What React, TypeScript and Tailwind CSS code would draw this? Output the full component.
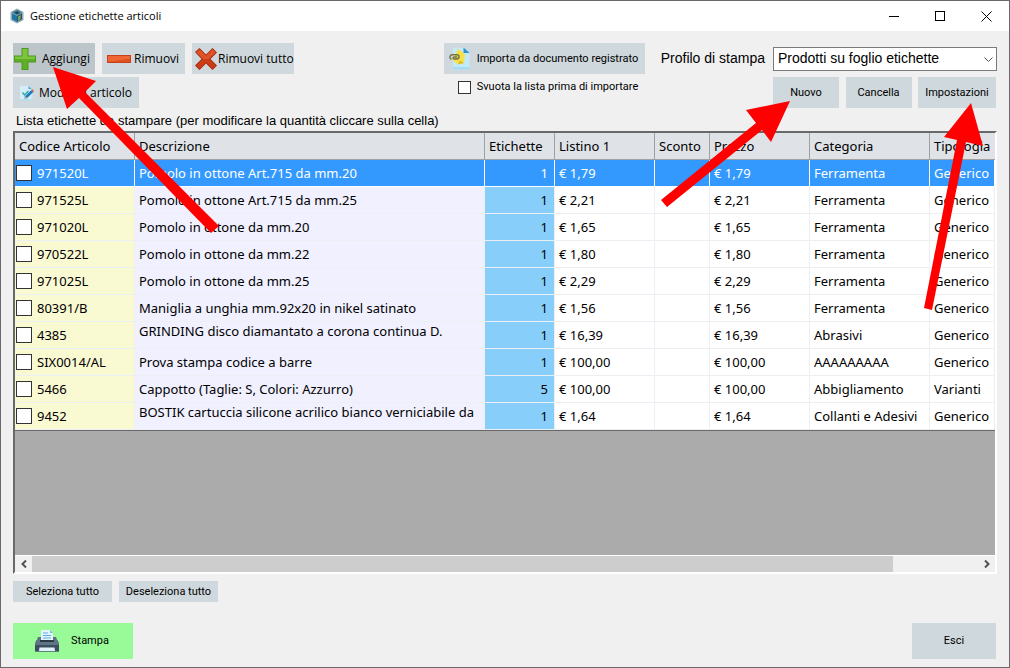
import React, { useState } from 'react';
import clsx from 'clsx';

interface Articolo {
  codice: string;
  descrizione: string;
  etichette: number;
  prezzo: string;
  categoria: string;
  tipologia: string;
  multiline?: boolean;
}

const articoli: Articolo[] = [
  { codice: '971520L', descrizione: 'Pomolo in ottone Art.715 da mm.20', etichette: 1, prezzo: '€ 1,79', categoria: 'Ferramenta', tipologia: 'Generico' },
  { codice: '971525L', descrizione: 'Pomolo in ottone Art.715 da mm.25', etichette: 1, prezzo: '€ 2,21', categoria: 'Ferramenta', tipologia: 'Generico' },
  { codice: '971020L', descrizione: 'Pomolo in ottone da mm.20', etichette: 1, prezzo: '€ 1,65', categoria: 'Ferramenta', tipologia: 'Generico' },
  { codice: '970522L', descrizione: 'Pomolo in ottone da mm.22', etichette: 1, prezzo: '€ 1,80', categoria: 'Ferramenta', tipologia: 'Generico' },
  { codice: '971025L', descrizione: 'Pomolo in ottone da mm.25', etichette: 1, prezzo: '€ 2,29', categoria: 'Ferramenta', tipologia: 'Generico' },
  { codice: '80391/B', descrizione: 'Maniglia a unghia mm.92x20 in nikel satinato', etichette: 1, prezzo: '€ 1,56', categoria: 'Ferramenta', tipologia: 'Generico' },
  { codice: '4385', descrizione: 'GRINDING disco diamantato a corona continua D.', etichette: 1, prezzo: '€ 16,39', categoria: 'Abrasivi', tipologia: 'Generico', multiline: true },
  { codice: 'SIX0014/AL', descrizione: 'Prova stampa codice a barre', etichette: 1, prezzo: '€ 100,00', categoria: 'AAAAAAAAA', tipologia: 'Generico' },
  { codice: '5466', descrizione: 'Cappotto (Taglie: S, Colori: Azzurro)', etichette: 5, prezzo: '€ 100,00', categoria: 'Abbigliamento', tipologia: 'Varianti' },
  { codice: '9452', descrizione: 'BOSTIK cartuccia silicone acrilico bianco verniciabile da', etichette: 1, prezzo: '€ 1,64', categoria: 'Collanti e Adesivi', tipologia: 'Generico', multiline: true }
];

const colonne = [
  { title: 'Codice Articolo', width: 'w-[120px]' },
  { title: 'Descrizione', width: 'w-[350px]' },
  { title: 'Etichette', width: 'w-[70px]' },
  { title: 'Listino 1', width: 'w-[100px]' },
  { title: 'Sconto', width: 'w-[55px]' },
  { title: 'Prezzo', width: 'w-[100px]' },
  { title: 'Categoria', width: 'w-[120px]' },
  { title: 'Tipologia', width: '' }
];

const AppIcon = () => (
  <svg viewBox="0 0 14 16" className="w-[14px] h-4">
    <path d="M7 0.5L13.5 4v8L7 15.5 0.5 12V4z" fill="#8fb0b8" />
    <path d="M7 1.8L12.2 4.6 7 7.4 1.8 4.6z" fill="#4d8496" />
    <path d="M2 5.2l5 2.7v6L2 11.2z" fill="#1f75a8" />
    <path d="M12 5.2L7 7.9v6l5-2.7z" fill="#2b5560" />
    <path d="M4 4.6l3-1.4 3 1.4-3 1.6z" fill="#17465e" />
    <path d="M8.3 8.6l2.7-1.4v1l-1.6.9v.8l1.3-.7v1l-1.3.7v1.5l-1.1.6z" fill="#a3c46a" />
  </svg>
);

const PlusIcon = () => (
  <svg viewBox="0 0 22 22" className="w-[22px] h-[22px] shrink-0">
    <path d="M7.5 0h7v7.5H22v7h-7.500V22h-7v-7.500H0v-7h7.500z" fill="#4c9a1d" />
    <path d="M8.500 1h5v7.500H21V11H1V8.500h7.500z" fill="#7cc53c" />
    <path d="M1 11h20v2.500h-7.500V21h-5v-7.500H1z" fill="#5fae27" />
  </svg>
);

const MinusIcon = () => (
  <svg viewBox="0 0 24 8" className="w-6 h-2 shrink-0">
    <path d="M0 0h24v8H0z" fill="#c8401c" />
    <path d="M1 1h22v3L1 7z" fill="#ee6733" />
    <path d="M23 4v3H1z" fill="#e0521f" />
  </svg>
);

const CrossIcon = () => (
  <svg viewBox="0 0 22 22" className="w-[22px] h-[22px] shrink-0">
    <path d="M0 4L4.500 0 11 6.500 17.500 0 22 4.500 15.500 11 22 17.500 17.500 22 11 15.500 4.500 22 0 17.500 6.500 11z" fill="#a82a0c" />
    <path d="M1.300 4.200L4.500 1.300 11 7.800l6.500-6.500 3.200 3.200L14 11H8z" fill="#e0532a" />
    <path d="M8 11h6l6.700 6.500-3.200 3.200L11 14.200l-6.500 6.500-3.200-3.200z" fill="#cb3d16" />
  </svg>
);

const EditIcon = () => (
  <svg viewBox="0 0 14 16" className="w-[14px] h-4 shrink-0">
    <path d="M0 1h8.500L11.500 4v11.500H0z" fill="#d3eefa" />
    <path d="M8.500 1v3h3z" fill="#3fa5d8" />
    <path d="M0 14.500h11.500v1H0z" fill="#a2d4ea" />
    <path d="M2.500 7.500l2 2.500 4-4" fill="none" stroke="#2eae9a" strokeWidth="1.500" />
    <path d="M5 11.300L11.300 5 13.300 7 7 13.200l-2.700.8z" fill="#1f7fc0" />
    <path d="M11.300 5l.8-.9 2 2-.8.9z" fill="#e2574c" />
    <path d="M4.300 14l.7-2.700L7 13.200z" fill="#f1c27d" />
  </svg>
);

const ImportIcon = () => (
  <svg viewBox="0 0 21 23" className="w-[21px] h-[23px] shrink-0">
    <path d="M4 1h11l5.500 5.500V22.500H4z" fill="#c3eafa" />
    <path d="M4 20h16.500v2.500H4z" fill="#a7dcf2" />
    <path d="M14.500 0.500v5.500h6z" fill="#2b93cf" />
    <path d="M9 1.500l7 5.500-1 9-6 1.500-5-4z" fill="#f6e04c" />
    <path d="M9 17.500l6-1.500-4.500-2.500z" fill="#d9bd2a" />
    <path d="M2.500 12.500C0 11 .5 7.700 3.500 7.700h4.300c3 0 3 4.300 0 4.300H5.200c-1.500 0-1.500-2 0-2h3" fill="none" stroke="#75713f" strokeWidth="1.400" />
  </svg>
);

const PrinterIcon = () => (
  <svg viewBox="0 0 24 22" className="w-6 h-[22px] shrink-0">
    <path d="M6 0h9l3 3v9H6z" fill="#e6f5fd" />
    <path d="M15 0v3h3z" fill="#6cc0e8" />
    <path d="M8 3h5M8 5.500h8M8 8h8" stroke="#5aaee0" strokeWidth="1.200" />
    <path d="M3 7h3v4h12V7h3l1.500 4H1.500z" fill="#5c7386" />
    <path d="M1.500 10h21L24 13v8.500H0V13z" fill="#5f7485" />
    <path d="M0 15h24v6.500H0z" fill="#3d4f5e" />
    <path d="M5 10h14v2H5z" fill="#2c3a46" />
    <path d="M4.500 17.500h15l.5 3.500H4z" fill="#dff3fc" />
  </svg>
);

interface ButtonProps {
  className?: string;
  children: React.ReactNode;
  onClick?: () => void;
}

const Button = ({ className, children, onClick }: ButtonProps) => (
  <button
    type="button"
    onClick={onClick}
    className={clsx('flex items-center whitespace-nowrap leading-4', className)}
  >
    {children}
  </button>
);

const TitleBar = () => (
  <header className="flex h-[30px] shrink-0 items-center bg-white pl-[9px]">
    <AppIcon />
    <h1 className="ml-[6px] font-['Open_Sans',sans-serif] text-[11px] leading-4">Gestione etichette articoli</h1>
    <div className="ml-auto flex h-full">
      <button type="button" aria-label="Riduci a icona" className="flex w-[46px] items-center justify-center">
        <svg viewBox="0 0 11 11" className="w-[11px] h-[11px]" shapeRendering="crispEdges">
          <path d="M0 5.500h10" stroke="#000" />
        </svg>
      </button>
      <button type="button" aria-label="Ingrandisci" className="flex w-[46px] items-center justify-center">
        <svg viewBox="0 0 11 11" className="w-[11px] h-[11px]" shapeRendering="crispEdges">
          <path d="M0.500 0.500h9v9h-9z" fill="none" stroke="#000" />
        </svg>
      </button>
      <button type="button" aria-label="Chiudi" className="flex w-[46px] items-center justify-center">
        <svg viewBox="0 0 11 11" className="w-[11px] h-[11px]">
          <path d="M0.500 0.500l10 10M10.500 0.500l-10 10" stroke="#000" />
        </svg>
      </button>
    </div>
  </header>
);

const Toolbar = () => (
  <div className="flex shrink-0">
    <div className="flex flex-col items-start gap-[3px] font-['Open_Sans',sans-serif] text-[12px]">
      <div className="flex gap-[7px]">
        <Button className="h-[31px] w-[82px] gap-[6px] bg-[#bcc5ca] pl-px">
          <PlusIcon />
          Aggiungi
        </Button>
        <Button className="h-[31px] w-[83px] gap-[3px] bg-[#cfd8dc] pl-[5px]">
          <MinusIcon />
          Rimuovi
        </Button>
        <Button className="h-[31px] w-[102px] gap-px bg-[#cfd8dc] pl-[3px]">
          <CrossIcon />
          Rimuovi tutto
        </Button>
      </div>
      <Button className="h-[31px] w-[126px] gap-[5px] bg-[#cfd8dc] pl-[7px]">
        <EditIcon />
        Modifica articolo
      </Button>
    </div>

    <div className="ml-auto flex gap-4">
      <div>
        <Button className="h-[31px] w-[201px] gap-[7px] bg-[#cfd8dc] pl-[5px]">
          <ImportIcon />
          Importa da documento registrato
        </Button>
        <label className="mt-1 flex items-center gap-[6px] pl-[14px] leading-[18px]">
          <input type="checkbox" className="h-[13px] w-[13px] appearance-none border border-[#333] bg-white checked:bg-[#3399ff]" />
          Svuota la lista prima di importare
        </label>
      </div>

      <div className="flex flex-col gap-[3px]">
        <div className="flex h-[31px] items-center gap-2 font-['Liberation_Sans',sans-serif] text-[14px]">
          <label htmlFor="profilo">Profilo di stampa</label>
          <div className="relative w-56">
            <select
              id="profilo"
              className="block h-6 w-full appearance-none border border-[#7a7a7a] bg-white pl-1 pb-[2px] leading-5"
            >
              <option>Prodotti su foglio etichette</option>
            </select>
            <svg viewBox="0 0 9 5" className="pointer-events-none absolute top-[10px] right-1 w-[9px] h-[5px]">
              <path d="M0.500 0.500l4 4 4-4" fill="none" stroke="#555" />
            </svg>
          </div>
        </div>
        <div className="flex w-56 justify-between self-end pr-px">
          <Button className="h-[31px] w-[66px] justify-center bg-[#cfd8dc]">Nuovo</Button>
          <Button className="h-[31px] w-[66px] justify-center bg-[#cfd8dc]">Cancella</Button>
          <Button className="h-[31px] w-[78px] justify-center bg-[#cfd8dc]">Impostazioni</Button>
        </div>
      </div>
    </div>
  </div>
);

interface RowProps {
  articolo: Articolo;
  selected: boolean;
  checked: boolean;
  onSelect: () => void;
  onCheck: () => void;
}

const Row = ({ articolo, selected, checked, onSelect, onCheck }: RowProps) => {
  const cell = clsx(
    'h-[27px] overflow-hidden border-r border-b p-0 pl-1 whitespace-nowrap',
    selected ? 'border-white bg-[#3399ff] text-white' : 'border-[#eceff3]'
  );
  const white = !selected && 'bg-white';

  return (
    <tr onClick={onSelect}>
      <td className={clsx(cell, !selected && 'bg-[#fafad2]')}>
        <label className="-ml-[3px] flex items-center gap-[5px]">
          <input
            type="checkbox"
            checked={checked}
            onChange={onCheck}
            className="h-4 w-4 appearance-none border border-[#333] bg-white checked:bg-[#333]"
          />
          {articolo.codice}
        </label>
      </td>
      <td
        className={clsx(cell, !selected && 'bg-[#f0f0ff]', articolo.multiline && 'pb-2')}
      >
        {articolo.descrizione}
      </td>
      <td className={clsx(cell, 'pr-[6px] text-right', !selected && 'bg-[#87cefa]')}>{articolo.etichette}</td>
      <td className={clsx(cell, white)}>{articolo.prezzo}</td>
      <td className={clsx(cell, white)}></td>
      <td className={clsx(cell, white)}>{articolo.prezzo}</td>
      <td className={clsx(cell, white)}>{articolo.categoria}</td>
      <td className={clsx(cell, white)}>{articolo.tipologia}</td>
    </tr>
  );
};

const Grid = ({ checked, onCheck }: { checked: string[]; onCheck: (codice: string) => void }) => {
  const [selected, setSelected] = useState('971520L');

  return (
    <div className="flex min-h-0 flex-1 flex-col border-2 border-t-[#696969] border-l-[#696969] border-r-white border-b-white bg-[#ababab]">
      <div className="min-h-0 flex-1 overflow-hidden">
        <table className="w-full table-fixed border-separate border-spacing-0 border-b border-[#696969] font-['Noto_Sans',sans-serif] text-[13px] leading-[18px]">
          <thead>
            <tr>
              {colonne.map((col) => (
                <th
                  key={col.title}
                  className={clsx(
                    'h-[27px] border-r border-b border-[#a0a0a0] bg-[#dfe3e8] p-0 pl-1 text-left font-normal whitespace-nowrap last:border-r-0',
                    col.width
                  )}
                >
                  {col.title}
                </th>
              ))}
            </tr>
          </thead>
          <tbody>
            {articoli.map((articolo) => (
              <Row
                key={articolo.codice}
                articolo={articolo}
                selected={selected === articolo.codice}
                checked={checked.includes(articolo.codice)}
                onSelect={() => setSelected(articolo.codice)}
                onCheck={() => onCheck(articolo.codice)}
              />
            ))}
          </tbody>
        </table>
      </div>

      <div className="flex h-[17px] shrink-0 border-t border-white bg-[#f0f0f0]">
        <button type="button" aria-label="Scorri a sinistra" className="flex w-[17px] items-center justify-center">
          <svg viewBox="0 0 6 8" className="w-[6px] h-2">
            <path d="M5 0.500L1.500 4 5 7.500" fill="none" stroke="#505050" strokeWidth="2" />
          </svg>
        </button>
        <div className="flex-1">
          <div className="h-full w-[91%] bg-[#cdcdcd]" />
        </div>
        <button type="button" aria-label="Scorri a destra" className="flex w-[17px] items-center justify-center">
          <svg viewBox="0 0 6 8" className="w-[6px] h-2">
            <path d="M1 0.500L4.500 4 1 7.500" fill="none" stroke="#505050" strokeWidth="2" />
          </svg>
        </button>
      </div>
    </div>
  );
};

// Red pointers drawn over the window
const Arrows = () => (
  <svg width="1010" height="668" viewBox="0 0 1010 668" className="pointer-events-none absolute -top-px -left-px">
    <g fill="#ff0000">
      <path d="M53 67L96 81 85 92 219 226 211 233 79 98 67 109z" />
      <path d="M790 101L771 142 762 130 667 207 661 200 756 123 746 110z" />
      <path d="M971 103L983 146 966 142 932 310 924 308 957 140 944 137z" />
    </g>
  </svg>
);

const App = () => {
  const [checked, setChecked] = useState<string[]>([]);

  const toggle = (codice: string) => {
    setChecked((prev) => (prev.includes(codice) ? prev.filter((c) => c !== codice) : [...prev, codice]));
  };

  return (
    <div className="relative flex h-screen flex-col overflow-hidden border border-[#6b676b] bg-[#f0f0f0] font-[Roboto,sans-serif] text-[11px] text-black">
      <TitleBar />
      <main className="flex min-h-0 flex-1 flex-col px-3 pt-3 pb-2">
        <Toolbar />
        <p className="mt-[3px] h-5 shrink-0 pl-[3px] font-['Liberation_Sans',sans-serif] text-[13px] leading-5">
          Lista etichette da stampare (per modificare la quantità cliccare sulla cella)
        </p>
        <Grid checked={checked} onCheck={toggle} />
        <div className="mt-[7px] flex shrink-0 gap-[7px]">
          <Button
            className="h-[21px] w-[99px] justify-center bg-[#cfd8dc]"
            onClick={() => setChecked(articoli.map((a) => a.codice))}
          >
            Seleziona tutto
          </Button>
          <Button className="h-[21px] w-[99px] justify-center bg-[#cfd8dc]" onClick={() => setChecked([])}>
            Deseleziona tutto
          </Button>
        </div>
        <div className="mt-[21px] flex shrink-0 justify-between pr-px">
          <Button className="h-9 w-[120px] gap-3 bg-[#98fb98] pl-[22px]">
            <PrinterIcon />
            Stampa
          </Button>
          <Button className="h-9 w-[84px] justify-center bg-[#cfd8dc]">Esci</Button>
        </div>
      </main>
      <Arrows />
    </div>
  );
};

export default App;
